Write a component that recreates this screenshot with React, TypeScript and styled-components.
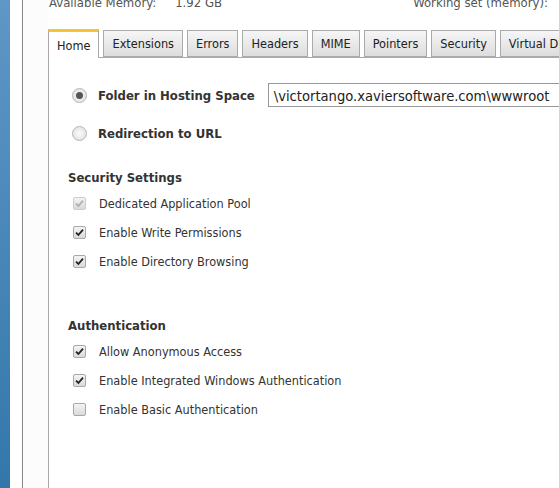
import styled, { createGlobalStyle } from 'styled-components';

const GlobalStyle = createGlobalStyle`
    html, body {
        margin: 0;
        padding: 0;
        background: #ffffff;
    }
    body {
        font-family: 'DejaVu Sans Condensed', Tahoma, 'DejaVu Sans', sans-serif;
        font-size: 13px;
        color: #333333;
    }
`;

const Page = styled.div`
    display: flex;
    width: 559px;
    height: 488px;
    overflow: hidden;
`;

const BlueStrip = styled.div`
    width: 10px;
    flex: none;
    background: linear-gradient(#5f97c6, #3377aa);
`;

const Gutter = styled.div`
    width: 12px;
    flex: none;
    background: #ffffff;
`;

const Sidebar = styled.div`
    width: 25px;
    flex: none;
    border-left: 1px solid #888888;
    background: #fcfcfc;
`;

const Main = styled.div`
    flex: 1;
    min-width: 0;
    display: flex;
    flex-direction: column;
`;

const InfoRow = styled.div`
    display: flex;
    height: 34px;
    margin-top: -5px;
    padding-left: 1px;
    color: #555555;
    white-space: nowrap;
`;

const InfoValue = styled.span`
    margin-left: 19px;
`;

const InfoRight = styled.span`
    margin-left: auto;
    margin-right: 11px;
`;

const TabStrip = styled.div`
    display: flex;
    align-items: flex-end;
    gap: 4px;
    height: 28px;
    border-bottom: 1px solid #aaaaaa;
    white-space: nowrap;
    font-size: 12.6px;
`;

const Tab = styled.div<{ $active?: boolean }>`
    flex: none;
    box-sizing: border-box;
    height: ${(p) => (p.$active ? '29px' : '27px')};
    margin-bottom: ${(p) => (p.$active ? '-1px' : '0')};
    padding: 0 8px;
    display: flex;
    align-items: center;
    border: 1px solid #aaaaaa;
    border-bottom: ${(p) => (p.$active ? 'none' : '1px solid #aaaaaa')};
    border-top: ${(p) => (p.$active ? '3px solid #f6c433' : '1px solid #aaaaaa')};
    background: ${(p) =>
        p.$active ? '#ffffff' : 'linear-gradient(#f6f6f6, #dddddd)'};
    color: #222222;
`;

const Panel = styled.div`
    flex: 1;
    border-left: 1px solid #aaaaaa;
    background: #ffffff;
    padding: 25px 0 0 19px;
`;

const RadioRow = styled.label`
    display: flex;
    align-items: center;
    height: 24px;
    margin-left: 4px;
    margin-bottom: 14px;
    font-weight: bold;
    color: #333333;
    white-space: nowrap;
`;

const Radio = styled.span<{ $checked?: boolean }>`
    flex: none;
    box-sizing: border-box;
    width: 15px;
    height: 15px;
    border-radius: 50%;
    border: 1px solid #b5b5b5;
    background: radial-gradient(circle, #fbfbfb, #dcdcdc);
    margin-right: 11px;
    display: flex;
    align-items: center;
    justify-content: center;
    &::after {
        content: '';
        display: ${(p) => (p.$checked ? 'block' : 'none')};
        width: 7px;
        height: 7px;
        border-radius: 50%;
        background: #555555;
    }
`;

const PathInput = styled.div`
    margin-left: 13px;
    box-sizing: border-box;
    height: 24px;
    flex: none;
    width: 320px;
    border: 1px solid #999999;
    padding-left: 5px;
    display: flex;
    align-items: center;
    font-weight: normal;
    font-size: 14.6px;
    color: #222222;
`;

const SectionTitle = styled.div<{ $top: number }>`
    margin-top: ${(p) => p.$top}px;
    font-weight: bold;
    color: #333333;
    height: 18px;
    line-height: 18px;
`;

const CheckList = styled.div`
    display: flex;
    flex-direction: column;
    gap: 10px;
    margin-top: 7px;
`;

const CheckRow = styled.div`
    display: flex;
    align-items: center;
    height: 19px;
    padding-left: 5px;
    white-space: nowrap;
    font-size: 12.6px;
`;

const Box = styled.span<{ $disabled?: boolean }>`
    flex: none;
    box-sizing: border-box;
    width: 13px;
    height: 13px;
    border-radius: 2px;
    border: 1px solid ${(p) => (p.$disabled ? '#cccccc' : '#a8a8a8')};
    background: linear-gradient(#f4f4f4, #dadada);
    margin-right: 13px;
    display: flex;
    align-items: center;
    justify-content: center;
`;

function Check({ disabled }: { disabled?: boolean }) {
    return (
        <svg width='9' height='9' viewBox='0 0 9 9'>
            <path
                d='M1 4.6 L3.4 7 L8 1.6'
                fill='none'
                stroke={disabled ? '#b0b0b0' : '#222222'}
                strokeWidth='1.8'
            />
        </svg>
    );
}

type Item = { label: string; checked: boolean; disabled?: boolean };

const security: Item[] = [
    { label: 'Dedicated Application Pool', checked: true, disabled: true },
    { label: 'Enable Write Permissions', checked: true },
    { label: 'Enable Directory Browsing', checked: true },
];

const auth: Item[] = [
    { label: 'Allow Anonymous Access', checked: true },
    { label: 'Enable Integrated Windows Authentication', checked: true },
    { label: 'Enable Basic Authentication', checked: false },
];

const tabs = [
    'Home',
    'Extensions',
    'Errors',
    'Headers',
    'MIME',
    'Pointers',
    'Security',
    'Virtual Directories',
];

function CheckItems({ items }: { items: Item[] }) {
    return (
        <CheckList>
            {items.map((item) => (
                <CheckRow key={item.label}>
                    <Box $disabled={item.disabled}>
                        {item.checked && <Check disabled={item.disabled} />}
                    </Box>
                    {item.label}
                </CheckRow>
            ))}
        </CheckList>
    );
}

export default function App() {
    return (
        <>
            <GlobalStyle />
            <Page>
                <BlueStrip />
                <Gutter />
                <Sidebar />
                <Main>
                    <InfoRow>
                        <span>Available Memory:</span>
                        <InfoValue>1.92 GB</InfoValue>
                        <InfoRight>Working set (memory):</InfoRight>
                    </InfoRow>
                    <TabStrip>
                        {tabs.map((t, i) => (
                            <Tab key={t} $active={i === 0}>
                                {t}
                            </Tab>
                        ))}
                    </TabStrip>
                    <Panel>
                        <RadioRow>
                            <Radio $checked />
                            Folder in Hosting Space
                            <PathInput>
                                \victortango.xaviersoftware.com\wwwroot
                            </PathInput>
                        </RadioRow>
                        <RadioRow>
                            <Radio />
                            Redirection to URL
                        </RadioRow>
                        <SectionTitle $top={24}>Security Settings</SectionTitle>
                        <CheckItems items={security} />
                        <SectionTitle $top={46}>Authentication</SectionTitle>
                        <CheckItems items={auth} />
                    </Panel>
                </Main>
            </Page>
        </>
    );
}
